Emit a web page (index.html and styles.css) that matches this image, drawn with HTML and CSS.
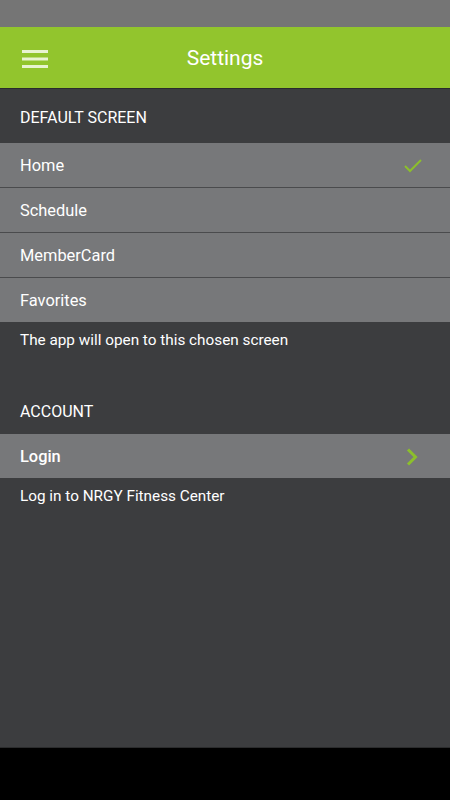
FILE: index.html
```html
<!DOCTYPE html>
<html lang="en">
<head>
<meta charset="UTF-8">
<meta name="viewport" content="width=device-width, initial-scale=1.0">
<title>Settings</title>
<link rel="stylesheet" href="styles.css">
</head>
<body>

<div class="status-bar"></div>

<header class="app-bar">
  <span class="menu-btn">
    <svg width="26" height="18" viewBox="0 0 26 18">
      <rect x="0" y="0" width="26" height="3" fill="#e8f3d0"/>
      <rect x="0" y="7.5" width="26" height="3" fill="#e8f3d0"/>
      <rect x="0" y="15" width="26" height="3" fill="#e8f3d0"/>
    </svg>
  </span>
  <h1 class="title">Settings</h1>
</header>

<main class="content">
  <h2 class="section-title">DEFAULT SCREEN</h2>
  <ul class="list">
    <li class="row">Home
      <svg class="check" width="20" height="16" viewBox="0 0 20 16">
        <path d="M2 9 L7 14 L18 3" fill="none" stroke="#8cbf2c" stroke-width="2"/>
      </svg>
    </li>
    <li class="row">Schedule</li>
    <li class="row">MemberCard</li>
    <li class="row">Favorites</li>
  </ul>
  <p class="hint">The app will open to this chosen screen</p>

  <h2 class="section-title account">ACCOUNT</h2>
  <ul class="list">
    <li class="row bold">Login
      <svg class="chevron" width="12" height="18" viewBox="0 0 12 18">
        <path d="M2 1.5 L9.5 9 L2 16.5" fill="none" stroke="#8cbf2c" stroke-width="3"/>
      </svg>
    </li>
  </ul>
  <p class="hint">Log in to NRGY Fitness Center</p>
</main>

<div class="nav-bar"></div>

</body>
</html>
```

FILE: styles.css
```css
* {
  padding: 0;
  margin: 0;
  box-sizing: border-box;
  font-family: Roboto, "Noto Sans", sans-serif;
}

body {
  width: 450px;
  height: 800px;
  display: flex;
  flex-direction: column;
  background-color: #3c3d3f;
  color: #ffffff;
  overflow: hidden;
}

.status-bar {
  height: 27px;
  background-color: #757575;
}

.app-bar {
  height: 62px;
  background-color: #92c52d;
  border-bottom: 1px solid #2a2b2c;
  display: flex;
  align-items: center;
  position: relative;
}

.menu-btn {
  display: flex;
  margin-left: 22px;
  margin-top: 2px;
}

.title {
  position: absolute;
  left: 0;
  right: 0;
  top: 1px;
  bottom: 0;
  display: flex;
  align-items: center;
  justify-content: center;
  font-size: 21px;
  font-weight: 400;
  pointer-events: none;
}

.content {
  flex: 1;
  display: flex;
  flex-direction: column;
  border-bottom: 1px solid #2b2c2d;
}

.section-title {
  font-size: 16px;
  font-weight: 400;
  height: 54px;
  padding: 19px 20px 0;
  line-height: 20px;
}

.section-title.account {
  margin-top: 39px;
  height: 45px;
  padding-top: 13px;
}

.list {
  list-style: none;
}

.row {
  height: 45px;
  background-color: #77787a;
  border-bottom: 1px solid #4a4b4d;
  padding: 0 20px;
  display: flex;
  align-items: center;
  justify-content: space-between;
  font-size: 16.4px;
  padding-top: 1px;
}

.row:last-child {
  border-bottom: none;
  height: 44px;
}

.row.bold {
  font-weight: 500;
}

.check {
  margin-right: 7px;
  margin-top: -2px;
}

.chevron {
  margin-right: 12px;
}

.hint {
  font-size: 15.3px;
  line-height: 20px;
  padding: 8px 20px 0;
}

.nav-bar {
  height: 52px;
  background-color: #000000;
}
```
